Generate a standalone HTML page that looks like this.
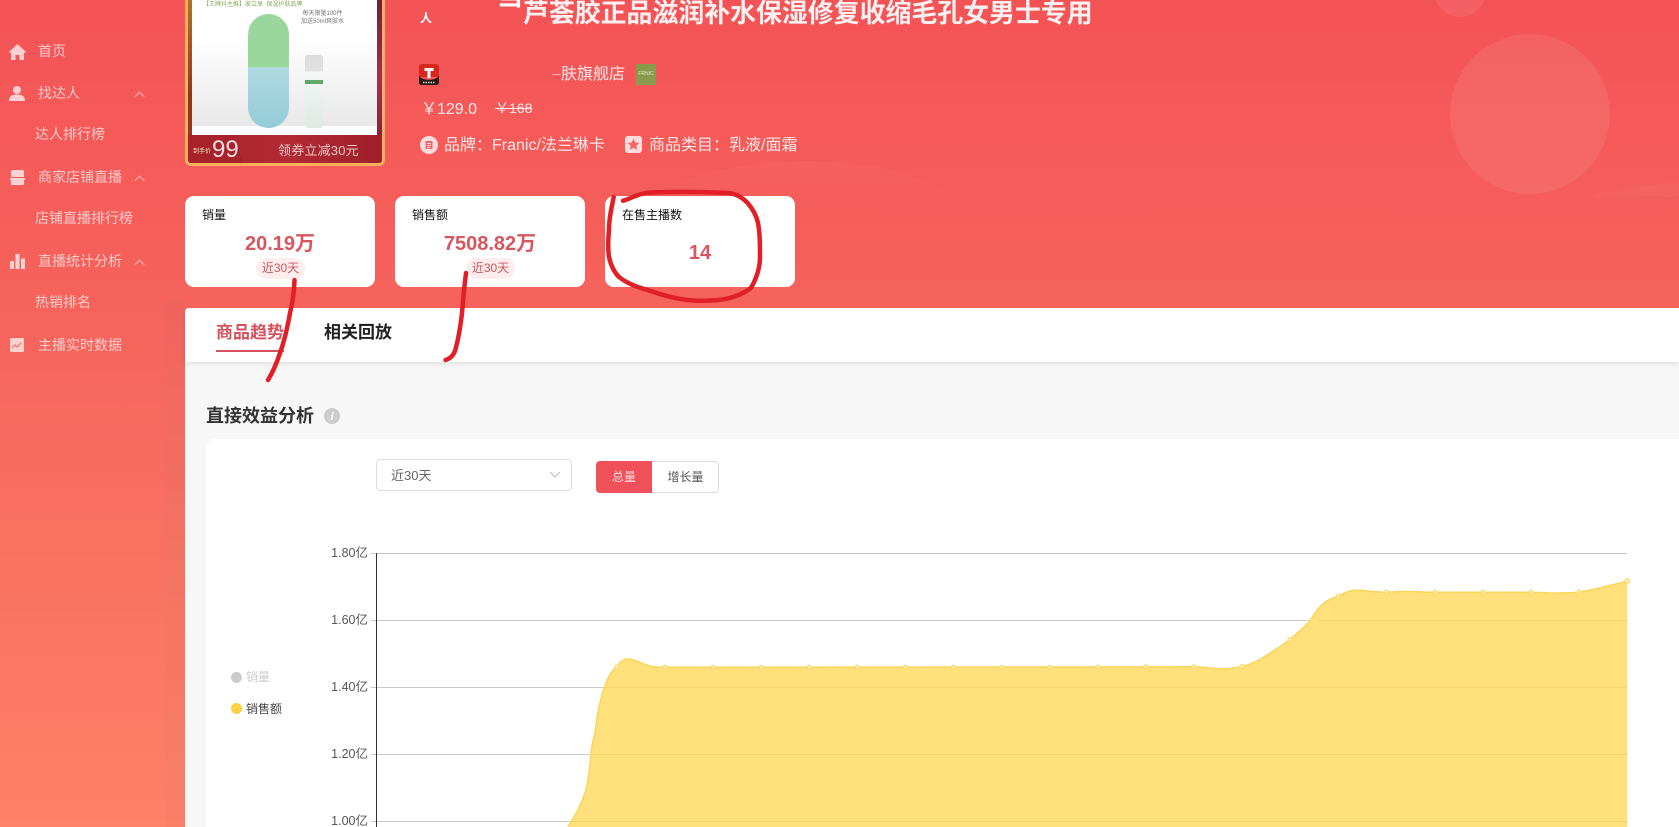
<!DOCTYPE html>
<html lang="zh"><head><meta charset="utf-8"><title>商品详情</title>
<style>
*{box-sizing:border-box;margin:0;padding:0}
html,body{width:1679px;height:827px;overflow:hidden;background:#fff}
body{position:relative;font-family:"Liberation Sans","Noto Sans CJK SC",sans-serif}
.a{position:absolute;white-space:nowrap}
.side{color:rgba(255,255,255,.68);font-size:14px;line-height:20px}
.card{position:absolute;top:196px;height:91px;width:190px;background:#fff;border-radius:9px}
.ct{position:absolute;top:10px;left:17px;font-size:12px;line-height:18px;color:#111}
.cv{position:absolute;left:0;width:100%;top:35px;text-align:center;font-size:20px;line-height:26px;font-weight:700;color:#d6575f}
.pill{position:absolute;top:62px;left:71px;width:49px;height:21px;border-radius:11px;background:#fdeded;color:#c9575c;font-size:12px;line-height:21px;text-align:center}
.yl{position:absolute;left:318px;width:50px;text-align:right;font-size:12.5px;line-height:16px;color:#555}
</style></head><body>
<!-- background -->
<div class="a" style="left:0;top:0;width:1679px;height:827px;background:linear-gradient(180deg,#f45356 0,#f6635c 308px,#fe8168 827px)"></div>
<div class="a" style="left:165px;top:300px;width:20px;height:527px;background:rgba(130,130,120,.05)"></div>
<!-- header decoration -->
<svg class="a" style="left:0;top:0" width="1679" height="308" viewBox="0 0 1679 308">
<defs><linearGradient id="w" x1="0" y1="0" x2="0" y2="1"><stop offset="0" stop-color="#fff" stop-opacity=".035"/><stop offset="1" stop-color="#fff" stop-opacity="0"/></linearGradient></defs>
<circle cx="1530" cy="114" r="80" fill="#fff" opacity=".08"/>
<circle cx="1460" cy="-9" r="26" fill="#fff" opacity=".08"/>
<path d="M640 200C700 165 790 155 860 165C900 170 930 180 960 200Z" fill="url(#w)"/>
<path d="M1587 196C1620 190 1650 185 1679 182V197Z" fill="#fff" opacity=".04"/>
</svg>
<!-- sidebar -->
<svg class="a" style="left:9px;top:44px" width="17" height="16" viewBox="0 0 17 16"><path d="M8.500 0L0 8l1 1 1-.6V16h4.500v-5h4v5H15V8.400l1 .6 1-1z" fill="#fff" opacity=".72"/></svg>
<div class="a side" style="left:38px;top:41px">首页</div>
<svg class="a" style="left:9px;top:86px" width="16" height="15" viewBox="0 0 16 15"><circle cx="8" cy="4" r="4" fill="#fff" opacity=".72"/><path d="M0 15c0-5 3-6.500 8-6.500S16 10 16 15z" fill="#fff" opacity=".72"/></svg>
<div class="a side" style="left:38px;top:83px">找达人</div>
<div class="a side" style="left:35px;top:124px">达人排行榜</div>
<svg class="a" style="left:10px;top:170px" width="15" height="15" viewBox="0 0 15 15"><path d="M1 2q0-2 2-2h9q2 0 2 2v5H1z" fill="#fff" opacity=".72"/><path d="M0 8h15v2h-1v4q0 1-1 1H2q-1 0-1-1v-4H0z" fill="#fff" opacity=".72"/></svg>
<div class="a side" style="left:38px;top:167px">商家店铺直播</div>
<div class="a side" style="left:35px;top:208px">店铺直播排行榜</div>
<svg class="a" style="left:10px;top:254px" width="15" height="15" viewBox="0 0 15 15"><path d="M0 7h4v8H0zM5.500 0h4v15h-4zM11 4.500h4V15h-4z" fill="#fff" opacity=".72"/></svg>
<div class="a side" style="left:38px;top:251px">直播统计分析</div>
<div class="a side" style="left:35px;top:292px">热销排名</div>
<svg class="a" style="left:10px;top:338px" width="14" height="14" viewBox="0 0 14 14"><rect width="14" height="14" rx="1.500" fill="#fff" opacity=".7"/><path d="M2 10l3-3 2 2 4-4" fill="none" stroke="#f0655f" stroke-width="1"/></svg>
<div class="a side" style="left:38px;top:335px">主播实时数据</div>
<svg class="a" style="left:134px;top:91px" width="11" height="7" viewBox="0 0 11 7"><path d="M.8 5.800L5.500 1.200l4.700 4.600" fill="none" stroke="#fff" stroke-opacity=".6"/></svg>
<svg class="a" style="left:134px;top:175px" width="11" height="7" viewBox="0 0 11 7"><path d="M.8 5.800L5.500 1.200l4.700 4.600" fill="none" stroke="#fff" stroke-opacity=".6"/></svg>
<svg class="a" style="left:134px;top:259px" width="11" height="7" viewBox="0 0 11 7"><path d="M.8 5.800L5.500 1.200l4.700 4.600" fill="none" stroke="#fff" stroke-opacity=".6"/></svg>
<!-- product image -->
<div class="a" style="left:185px;top:-10px;width:200px;height:176px;background:#fff;border:3px solid #f8b05c;border-top:0;border-radius:0 0 6px 6px;overflow:hidden">
<div class="a" style="left:0;top:0;width:4px;height:176px;background:linear-gradient(180deg,#b9762e,#8a3a1e 60%,#a83028)"></div>
<div class="a" style="right:0;top:0;width:5px;height:176px;background:linear-gradient(180deg,#6a1f35,#a03058 50%,#7c1c2a)"></div>
<div class="a" style="left:4px;top:0;width:185px;height:136px;background:linear-gradient(180deg,#fff 35%,#e8e8e8 100%)"></div>
<div class="a" style="left:4px;top:136px;width:185px;height:10px;background:#fff"></div>
<div class="a" style="left:60px;top:24px;width:41px;height:114px;border-radius:21px;background:linear-gradient(180deg,#9ad79c 0,#9ad79c 46.500%,#aed9e2 47%,#93ccd8 100%)"></div>
<div class="a" style="left:117px;top:65px;width:18px;height:73px;border-radius:3px;background:linear-gradient(180deg,#dcdcdc 0,#e0e0e0 22%,#f4f8f5 23%,#dfe8e2 100%)"></div>
<div class="a" style="left:117px;top:90px;width:18px;height:4px;background:#5fa96f"></div>
<div class="a" style="left:113px;top:20px;font-size:6px;line-height:8px;color:#777;text-align:center">每天限量100件<br>加送50ml爽肤水</div>
<div class="a" style="left:15px;top:11px;font-size:6px;line-height:8px;color:#8aa860">【王牌抖主推】家立享&nbsp; 保湿护肤品牌</div>
<div class="a" style="left:0;top:145px;width:194px;height:31px;background:linear-gradient(90deg,#a5232c,#b22a34 50%,#9f1f2a)"></div>
<div class="a" style="left:0;top:145px;width:56px;height:31px;background:#a8222c;clip-path:polygon(0 0,46px 0,56px 31px,0 31px)"></div>
<div class="a" style="left:24px;top:144px;font-size:24px;line-height:31px;color:#f4dede">99</div>
<div class="a" style="left:5px;top:157px;font-size:6px;line-height:10px;color:#eec">到手价</div>
<div class="a" style="left:90px;top:149px;font-size:13px;line-height:24px;color:#edc7c4;letter-spacing:.2px">领券立减30元</div>
</div>
<!-- title -->
<div class="a" style="left:497px;top:-19px;font-size:26px;line-height:30px;font-weight:700;color:#fff">当</div>
<div class="a" style="left:523px;top:-1px;font-size:25.900px;line-height:30px;font-weight:700;color:#fdf0f0">芦荟胶正品滋润补水保湿修复收缩毛孔女男士专用</div>
<div class="a" style="left:420px;top:8px;font-size:12px;line-height:20px;font-weight:700;color:#fff">人</div>
<!-- store -->
<svg class="a" style="left:419px;top:64px" width="20" height="21" viewBox="0 0 20 21"><path d="M3 0h14q3 0 3 3v10H0V3q0-3 3-3z" fill="#d8281a"/><path d="M0 12c4 5 16 5 20 0v6q0 3-3 3H3q-3 0-3-3z" fill="#2a1a15"/><path d="M5.500 4h9v3h-3v7h-3V7h-3z" fill="#fff"/><path d="M4 18.500h12" stroke="#e0d8d0" stroke-width="1.500" stroke-dasharray="1.500 1"/></svg>
<div class="a" style="left:552px;top:65px;font-size:9px;line-height:20px;color:#fbe6e6;opacity:.8">一</div>
<div class="a" style="left:561px;top:64px;font-size:16px;line-height:22px;color:#fbe6e6">肤旗舰店</div>
<div class="a" style="left:636px;top:64px;width:20px;height:21px;background:#8a9a4c;color:#dfe4c4;font-size:5px;line-height:21px;text-align:center">FRNIC</div>
<!-- price -->
<div class="a" style="left:421px;top:99px;font-size:16px;line-height:22px;color:#fde8e8">￥129.0</div>
<div class="a" style="left:495px;top:98px;font-size:14px;line-height:20px;color:#fde8e8;text-decoration:line-through">￥168</div>
<!-- brand row -->
<svg class="a" style="left:420px;top:136px" width="18" height="18" viewBox="0 0 18 18"><circle cx="9" cy="9" r="9" fill="#fbdcdc"/><path d="M5.500 5h7v8h-7z" fill="#f4646a"/><path d="M7 7.500h4M7 9.500h4M7 11.500h3" stroke="#fbdcdc"/></svg>
<div class="a" style="left:444px;top:135px;font-size:16px;line-height:22px;color:#fbe6e6">品牌：Franic/法兰琳卡</div>
<svg class="a" style="left:625px;top:136px" width="17" height="17" viewBox="0 0 17 17"><rect width="17" height="17" rx="3" fill="#fbdcdc"/><path d="M8.500 2.800l1.800 3.700 4 .5-3 2.800.8 4-3.600-2-3.600 2 .8-4-3-2.800 4-.5z" fill="#f4646a"/></svg>
<div class="a" style="left:649px;top:135px;font-size:16px;line-height:22px;color:#fbe6e6">商品类目：乳液/面霜</div>
<!-- cards -->
<div class="card" style="left:185px"><div class="ct">销量</div><div class="cv">20.19万</div><div class="pill">近30天</div></div>
<div class="card" style="left:395px"><div class="ct">销售额</div><div class="cv">7508.82万</div><div class="pill">近30天</div></div>
<div class="card" style="left:605px"><div class="ct">在售主播数</div><div class="cv" style="top:44px">14</div></div>
<!-- main panel -->
<div class="a" style="left:185px;top:308px;width:1494px;height:519px;background:#f7f7f7;border-radius:4px 0 0 0"></div>
<div class="a" style="left:185px;top:308px;width:1494px;height:54px;background:#fff;border-radius:4px 0 0 0;box-shadow:0 2px 5px rgba(0,0,0,.09)"></div>
<div class="a" style="left:216px;top:320px;font-size:17px;line-height:26px;font-weight:700;color:#d4525c">商品趋势</div>
<div class="a" style="left:216px;top:350px;width:68px;height:2px;background:#d4525c"></div>
<div class="a" style="left:324px;top:320px;font-size:17px;line-height:26px;font-weight:700;color:#222">相关回放</div>
<div class="a" style="left:206px;top:403px;font-size:18px;line-height:26px;font-weight:700;color:#333">直接效益分析</div>
<div class="a" style="left:324px;top:408px;width:16px;height:16px;border-radius:50%;background:#ccc;color:#fff;font:italic 700 12px/16px 'Liberation Serif',serif;text-align:center">i</div>
<div class="a" style="left:206px;top:439px;width:1473px;height:388px;background:#fff;border-radius:9px 0 0 0"></div>
<!-- select and buttons -->
<div class="a" style="left:376px;top:459px;width:196px;height:32px;background:#fff;border:1px solid #ddd;border-radius:4px"></div>
<div class="a" style="left:391px;top:466px;font-size:13px;line-height:20px;color:#666">近30天</div>
<svg class="a" style="left:549px;top:471px" width="12" height="7" viewBox="0 0 12 7"><path d="M1 1l5 5 5-5" fill="none" stroke="#bbb"/></svg>
<div class="a" style="left:596px;top:461px;width:123px;height:32px;border:1px solid #ddd;border-radius:4px;background:#fff"></div>
<div class="a" style="left:596px;top:461px;width:56px;height:32px;background:#f0505a;border-radius:4px 0 0 4px;color:#fbdfe0;font-size:12px;line-height:32px;text-align:center">总量</div>
<div class="a" style="left:652px;top:461px;width:67px;height:32px;color:#555;font-size:12px;line-height:32px;text-align:center">增长量</div>
<!-- legend -->
<div class="a" style="left:230.500px;top:671.500px;width:11px;height:11px;border-radius:50%;background:#ccc"></div>
<div class="a" style="left:246px;top:668px;font-size:12px;line-height:18px;color:#ccc">销量</div>
<div class="a" style="left:230.500px;top:703px;width:11px;height:11px;border-radius:50%;background:#f8d23f"></div>
<div class="a" style="left:246px;top:700px;font-size:12px;line-height:18px;color:#444">销售额</div>
<!-- chart -->
<div class="yl" style="top:545px">1.80亿</div>
<div class="yl" style="top:612px">1.60亿</div>
<div class="yl" style="top:679px">1.40亿</div>
<div class="yl" style="top:746px">1.20亿</div>
<div class="yl" style="top:813px">1.00亿</div>
<svg class="a" style="left:0;top:0" width="1679" height="827" viewBox="0 0 1679 827">
<g stroke="#c9c9c9" stroke-width="1" shape-rendering="crispEdges">
<path d="M371 553.500H1627M371 620.500H1627M371 687.500H1627M371 754.500H1627M371 821.500H1627"/>
</g>
<path d="M376.500 553V827" stroke="#333" stroke-width="1" shape-rendering="crispEdges"/>
<path d="M568 827C573 818 578 811 581 803C584 796 586 792 587 785C589 775 590 765 591 753C592 745 593 740 595 733C596 725 597 716 599 707C601 698 603 690 606 683C609 675 612 670 616.600 667.300C620 662 623 659 628 659C635 659 642 664 650 666C655 667 660 667.300 665 667.300L1193.800 666.800C1205 667 1214 669 1225 668.700C1232 668.500 1237 667.500 1242 666.500C1250 664.500 1256 662 1262.500 658C1272 652 1281 646 1290 639.700C1297 633 1304 628 1310.500 620C1314 614 1318 609 1321.600 605C1327 600 1332 598 1338.500 596.300C1344 593 1349 590.500 1354.800 590.300C1365 590 1375 592.300 1386.600 592.300C1393 592 1399 591.500 1406.500 591.500C1420 591.500 1425 592.300 1435 592.300L1531 592.300C1540 592.500 1549 593.300 1558 593C1566 593 1572 593 1579 592.300C1597 589 1612 585 1627.300 581V827Z" fill="#ffe07b"/>
<path d="M568 827C573 818 578 811 581 803C584 796 586 792 587 785C589 775 590 765 591 753C592 745 593 740 595 733C596 725 597 716 599 707C601 698 603 690 606 683C609 675 612 670 616.600 667.300C620 662 623 659 628 659C635 659 642 664 650 666C655 667 660 667.300 665 667.300L1193.800 666.800C1205 667 1214 669 1225 668.700C1232 668.500 1237 667.500 1242 666.500C1250 664.500 1256 662 1262.500 658C1272 652 1281 646 1290 639.700C1297 633 1304 628 1310.500 620C1314 614 1318 609 1321.600 605C1327 600 1332 598 1338.500 596.300C1344 593 1349 590.500 1354.800 590.300C1365 590 1375 592.300 1386.600 592.300C1393 592 1399 591.500 1406.500 591.500C1420 591.500 1425 592.300 1435 592.300L1531 592.300C1540 592.500 1549 593.300 1558 593C1566 593 1572 593 1579 592.300C1597 589 1612 585 1627.300 581" fill="none" stroke="#f8d65c" stroke-width="1.500"/>
<g stroke="#f3d46a" stroke-width="1" shape-rendering="crispEdges">
<path d="M1318 620.500H1627M606 687.500H1627M591 754.500H1627M569 821.500H1627"/>
</g>
<g fill="#fdf3b8" stroke="#f8d65c" stroke-width="1">
<circle cx="616.600" cy="667.300" r="2"/><circle cx="664.800" cy="667.300" r="2"/><circle cx="712.900" cy="667.300" r="2"/><circle cx="761" cy="667.300" r="2"/><circle cx="809.200" cy="667.300" r="2"/><circle cx="857.300" cy="667.300" r="2"/><circle cx="905.500" cy="667.300" r="2"/><circle cx="953.600" cy="667.300" r="2"/><circle cx="1001.800" cy="667.300" r="2"/><circle cx="1049.900" cy="667.300" r="2"/><circle cx="1098.100" cy="667" r="2"/><circle cx="1145.800" cy="666.800" r="2"/><circle cx="1193.800" cy="666.800" r="2"/><circle cx="1242" cy="666.500" r="2"/><circle cx="1290" cy="639.700" r="2"/><circle cx="1338.500" cy="596.300" r="2"/><circle cx="1386.600" cy="592.300" r="2"/><circle cx="1435" cy="592.300" r="2"/><circle cx="1483" cy="592.300" r="2"/><circle cx="1531" cy="592.300" r="2"/><circle cx="1579" cy="592.300" r="2"/><circle cx="1627.300" cy="581" r="2.300"/>
</g>
<g fill="none" stroke="#e01f26" stroke-width="4.500" stroke-linecap="round" stroke-linejoin="round">
<path d="M294.500 280C294 295 292 305 290 313C287 330 284 342 280 353C277 362 273 372 268 380"/>
<path d="M466 273C464 290 463 300 462 313C460 330 458 340 456 347C455 353 452 358 445.500 360"/>
<path d="M613.700 197C611 210 609 220 609 230C608 240 608 250 609 257C611 266 614 272 619 277C628 284 637 287 647.500 290C665 296 680 300 696.500 300.700C712 301 724 300 733 297C742 294 748 291 751.600 287C757 277 760 268 760 257C760 244 760 234 758 223C756 214 752 208 747.600 203C742 197 736 194 729 193C705 192 675 191 647.500 192.700C637 194 630 199 623 200.700"/>
</g>
</svg>
</body></html>
